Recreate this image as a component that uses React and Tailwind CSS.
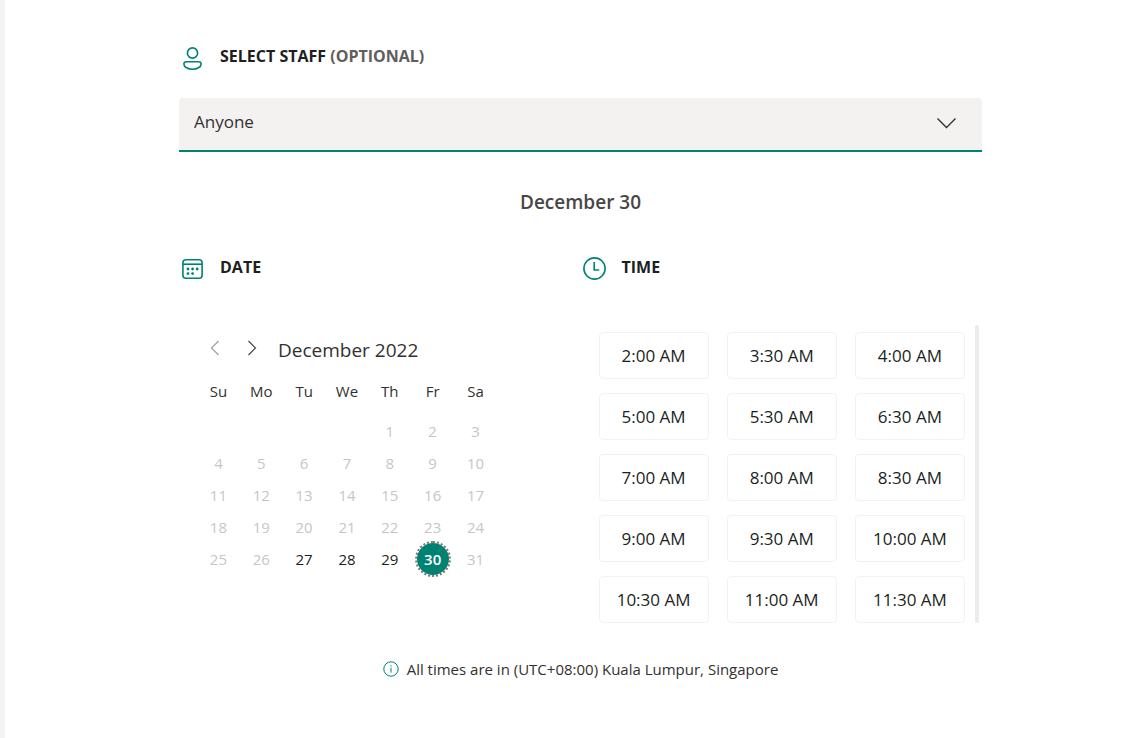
import { useState } from 'react'

const WEEKDAYS = ['Su', 'Mo', 'Tu', 'We', 'Th', 'Fr', 'Sa']

const WEEKS = [
  [null, null, null, null, 1, 2, 3],
  [4, 5, 6, 7, 8, 9, 10],
  [11, 12, 13, 14, 15, 16, 17],
  [18, 19, 20, 21, 22, 23, 24],
  [25, 26, 27, 28, 29, 30, 31],
]

const AVAILABLE_DAYS = [27, 28, 29, 30]

const TIME_SLOTS = [
  '2:00 AM', '3:30 AM', '4:00 AM',
  '5:00 AM', '5:30 AM', '6:30 AM',
  '7:00 AM', '8:00 AM', '8:30 AM',
  '9:00 AM', '9:30 AM', '10:00 AM',
  '10:30 AM', '11:00 AM', '11:30 AM',
]

const StaffIcon = () => (
  <svg className="w-6 h-6" viewBox="0 0 24 24" fill="none" stroke="#008272" strokeWidth="1.6" aria-hidden="true">
    <circle cx="11.5" cy="7" r="5.1" />
    <path d="M5 15.8h13a2.1 2.1 0 0 1 2.1 2.1c0 3.2-4 5.3-8.6 5.3s-8.6-2.1-8.6-5.3A2.1 2.1 0 0 1 5 15.8z" />
  </svg>
)

const CalendarIcon = () => (
  <svg className="w-6 h-6" viewBox="0 0 24 24" fill="none" stroke="#008272" strokeWidth="1.6" aria-hidden="true">
    <rect x="1.9" y="2.8" width="19.2" height="18.4" rx="3" />
    <path d="M2 7.2h19" />
    <g fill="#008272" stroke="none">
      <circle cx="7" cy="12" r="1.4" />
      <circle cx="11.6" cy="12" r="1.4" />
      <circle cx="16.2" cy="12" r="1.4" />
      <circle cx="7" cy="16.6" r="1.4" />
      <circle cx="11.6" cy="16.6" r="1.4" />
    </g>
  </svg>
)

const ClockIcon = () => (
  <svg className="w-6 h-6" viewBox="0 0 24 24" fill="none" stroke="#008272" strokeWidth="1.6" aria-hidden="true">
    <circle cx="11.5" cy="11.5" r="10.6" />
    <path d="M11.2 5v8h5" />
  </svg>
)

const InfoIcon = () => (
  <svg className="w-4 h-4" viewBox="0 0 16 16" fill="none" stroke="#008272" aria-hidden="true">
    <circle cx="8" cy="8" r="7.2" />
    <path d="M8 6.6v5" />
    <path d="M8 4.2v1.2" />
  </svg>
)

const dayClass = (day, selectedDay) => {
  if (day === selectedDay) {
    return 'w-9 h-9 -my-0.5 rounded-full border-2 border-dotted border-[#797775] bg-[#008272] bg-clip-padding text-white font-semibold'
  }
  return AVAILABLE_DAYS.includes(day) ? 'w-8 h-8 text-[#201f1e]' : 'w-8 h-8 text-[#c8c6c4]'
}

const App = () => {
  const [staff, setStaff] = useState('anyone')
  const [selectedDay, setSelectedDay] = useState(30)

  return (
    <div className="min-h-screen bg-white border-l-[5px] border-[#f3f3f3] font-['Open_Sans','Noto_Sans',sans-serif] text-[#323130]">
      <main className="pl-[174px] pr-[152px] pt-[46px] pb-14">
        <div className="flex items-start gap-[15px] pl-0.5">
          <StaffIcon />
          <label htmlFor="staff" className="text-base leading-5 font-bold text-[#201f1e]">
            SELECT STAFF <span className="text-[#605e5c]">(OPTIONAL)</span>
          </label>
        </div>

        <div className="relative mt-7">
          <select
            id="staff"
            value={staff}
            onChange={(e) => setStaff(e.target.value)}
            className="block w-full h-[54px] appearance-none rounded-t border-b-2 border-[#008272] bg-[#f3f2f1] pl-[15px] pr-12 pb-1 text-[17px]"
          >
            <option value="anyone">Anyone</option>
          </select>
          <svg className="pointer-events-none absolute right-6 top-4 w-6 h-[18px]" viewBox="0 0 24 18" fill="none" stroke="#323130" strokeWidth="1.4" aria-hidden="true">
            <path d="M3.5 4.5l9 9 9-9" />
          </svg>
        </div>

        <h2 className="mt-9 text-center text-[19px] leading-7 font-semibold text-[#484644]">December 30</h2>

        <div className="mt-[41px] grid grid-cols-2">
          <section>
            <div className="flex items-start gap-[15px] pl-0.5">
              <CalendarIcon />
              <h3 className="text-base leading-5 font-bold text-[#201f1e]">DATE</h3>
            </div>

            <div className="mt-[53px] ml-[18px]">
              <div className="flex items-center h-8">
                <button type="button" aria-label="Previous month" className="w-9 h-7 mr-px mb-1 flex items-center justify-center text-[#a19f9d]">
                  <svg className="w-4 h-4" viewBox="0 0 16 16" fill="none" stroke="currentColor" strokeWidth="1.2">
                    <path d="M11.5 1L4.5 8l7 7" />
                  </svg>
                </button>
                <button type="button" aria-label="Next month" className="w-9 h-7 mb-1 flex items-center justify-center text-[#484644]">
                  <svg className="w-4 h-4" viewBox="0 0 16 16" fill="none" stroke="currentColor" strokeWidth="1.2">
                    <path d="M4.5 1l7 7-7 7" />
                  </svg>
                </button>
                <span className="ml-2 text-[19px] leading-8">December 2022</span>
              </div>

              <table className="mt-[9px] w-[300px] table-fixed text-center text-[15px]">
                <thead>
                  <tr>
                    {WEEKDAYS.map((name) => (
                      <th key={name} scope="col" className="h-10 p-0 align-top font-normal leading-8">{name}</th>
                    ))}
                  </tr>
                </thead>
                <tbody>
                  {WEEKS.map((week) => (
                    <tr key={week[6]}>
                      {week.map((day, i) => (
                        <td key={i} className="h-8 p-0">
                          {day && (
                            <div className="flex h-8 items-center justify-center">
                              <button
                                type="button"
                                disabled={!AVAILABLE_DAYS.includes(day)}
                                onClick={() => setSelectedDay(day)}
                                className={dayClass(day, selectedDay)}
                              >
                                {day}
                              </button>
                            </div>
                          )}
                        </td>
                      ))}
                    </tr>
                  ))}
                </tbody>
              </table>
            </div>
          </section>

          <section>
            <div className="flex items-start gap-[15px] pl-0.5">
              <ClockIcon />
              <h3 className="text-base leading-5 font-bold text-[#201f1e]">TIME</h3>
            </div>

            <div className="mt-11 flex pl-[18px] pr-[3px]">
              <div className="grid flex-1 grid-cols-3 gap-x-[18px] gap-y-[14px] pt-[7px]">
                {TIME_SLOTS.map((slot) => (
                  <button
                    key={slot}
                    type="button"
                    className="h-[47px] rounded border border-[#f3f2f1] text-[17px] text-[#201f1e] hover:border-[#008272]"
                  >
                    {slot}
                  </button>
                ))}
              </div>
              <div className="ml-[10px] w-1 rounded-full bg-[#edebe9]" />
            </div>
          </section>
        </div>

        <p className="mt-9 flex items-center justify-center gap-2 text-[15px] leading-5">
          <InfoIcon />
          All times are in (UTC+08:00) Kuala Lumpur, Singapore
        </p>
      </main>
    </div>
  )
}

export default App
